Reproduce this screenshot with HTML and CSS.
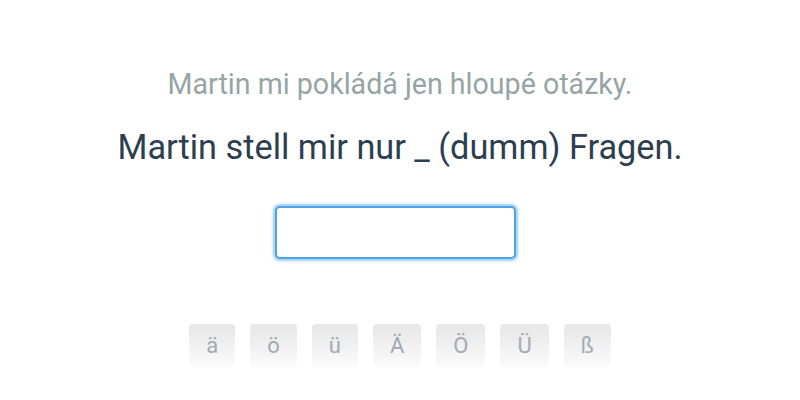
FILE: index.html
```html
<!DOCTYPE html>
<html lang="de">
<head>
<meta charset="utf-8">
<link rel="stylesheet" href="styles.css">
</head>
<body>
<main class="exercise">
  <p class="hint">Martin mi pokládá jen hloupé otázky.</p>
  <p class="sentence">Martin stell mir nur _ (dumm) Fragen.</p>
  <input class="answer" type="text" autofocus>
  <div class="keys">
    <button class="key">ä</button>
    <button class="key">ö</button>
    <button class="key">ü</button>
    <button class="key">Ä</button>
    <button class="key">Ö</button>
    <button class="key">Ü</button>
    <button class="key">ß</button>
  </div>
</main>
</body>
</html>
```
FILE: styles.css
```css
html, body {
  margin: 0;
  padding: 0;
  background: #ffffff;
}
body {
  font-family: Roboto, "Liberation Sans", sans-serif;
}
.exercise {
  display: flex;
  flex-direction: column;
  align-items: center;
  padding-top: 67px;
}
.hint {
  margin: 0;
  font-size: 28.6px;
  line-height: 34px;
  color: #95a5a6;
}
.sentence {
  margin: 26px 0 0 0;
  font-size: 34.3px;
  line-height: 40px;
  color: #2c3e50;
}
.answer {
  margin: 39px 10px 0 0;
  box-sizing: border-box;
  width: 241px;
  height: 53px;
  border: 2px solid #4da3e3;
  border-radius: 5px;
  box-shadow: 0 0 0 2px rgba(77, 163, 227, 0.3), 0 0 3px 3px rgba(77, 163, 227, 0.2);
  outline: none;
  font-family: inherit;
  font-size: 20px;
  padding: 0 10px;
}
.keys {
  display: flex;
  gap: 15px;
  margin-top: 65px;
}
.key {
  height: 43px;
  padding: 0 17px;
  border: none;
  border-radius: 4px;
  background: linear-gradient(to bottom, #e6e6e6, #fbfbfb);
  color: #a0aab3;
  font-family: inherit;
  font-size: 22px;
}
```
